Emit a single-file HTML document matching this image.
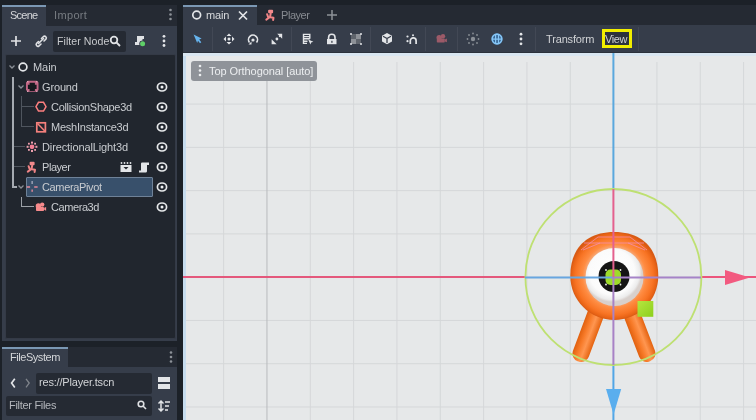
<!DOCTYPE html>
<html><head><meta charset="utf-8">
<style>
*{margin:0;padding:0;box-sizing:border-box}
html,body{width:756px;height:420px;overflow:hidden;background:#1c2128;font-family:"Liberation Sans",sans-serif;color:#c9ccd0}
.a{position:absolute}
.t{position:absolute;white-space:nowrap;font-size:11px;line-height:14px;letter-spacing:-0.2px;will-change:transform}
svg.i{position:absolute;overflow:visible}
</style></head><body>

<!-- ===== Left Scene dock ===== -->
<div class="a" style="left:2px;top:5px;width:175px;height:21px;background:#252a33"></div>
<div class="a" style="left:2px;top:26px;width:175px;height:315px;background:#363d4a"></div>
<div class="a" style="left:2px;top:5px;width:44px;height:22px;background:#363d4a"></div>
<div class="a" style="left:2px;top:5px;width:44px;height:2px;background:#7b98b4"></div>
<div class="t" style="left:10px;top:8px;color:#d4d6d9;letter-spacing:-0.75px">Scene</div>
<div class="t" style="left:54px;top:8px;color:#777c82;letter-spacing:0.35px">Import</div>
<!-- dock menu dots -->
<svg class="i" style="left:0;top:0" width="1" height="1"><g fill="#8d9298"><circle cx="170.5" cy="10" r="1.3"/><circle cx="170.5" cy="14.5" r="1.3"/><circle cx="170.5" cy="19" r="1.3"/></g></svg>

<!-- toolbar -->
<svg class="i" style="left:0;top:0" width="1" height="1">
 <g stroke="#dfe1e4" stroke-width="1.7" fill="none">
  <path d="M11 41H21M16 36V46"/>
 </g>
 <g stroke="#dfe1e4" stroke-width="1.6" fill="none" stroke-linecap="round">
  <path d="M38.5 41.5l-2 2a1.8 1.8 0 0 0 2.5 2.5l2-2"/>
  <path d="M41.5 38.5l2-2a1.8 1.8 0 0 1 2.5 2.5l-2 2"/>
  <path d="M38.5 43.5l5-5"/>
 </g>
</svg>
<div class="a" style="left:53px;top:31px;width:73px;height:21px;background:#252a33;border-radius:2px"></div>
<div class="t" style="left:57px;top:34px;color:#c8cacd;font-size:10.6px;letter-spacing:0.05px">Filter Node</div>
<svg class="i" style="left:0;top:0" width="1" height="1">
 <g stroke="#dfe1e4" stroke-width="1.8" fill="none"><circle cx="114" cy="40" r="3.3"/><path d="M116.5 42.5l3.5 3.5"/></g>
 <g fill="#e0e2e5"><path d="M137 36h7v3h-1.5v6h-7.5v-3h2z"/></g>
 <circle cx="142.6" cy="43.8" r="3.4" fill="#363d4a"/><circle cx="142.6" cy="43.8" r="2.5" fill="#5fd068"/>
 <g fill="#e3e5e8"><circle cx="164" cy="36.3" r="1.4"/><circle cx="164" cy="41" r="1.4"/><circle cx="164" cy="45.5" r="1.4"/></g>
</svg>

<!-- tree -->
<div class="a" style="left:5px;top:54px;width:171px;height:285px;background:#21262e;border:1px solid #343a46;border-radius:2px"></div>


<!-- tree lines -->
<div class="a" style="left:12px;top:77px;width:2px;height:111px;background:#a5aab1"></div>
<div class="a" style="left:12px;top:186px;width:5px;height:2px;background:#a5aab1"></div>
<div class="a" style="left:14px;top:146px;width:11px;height:1px;background:#4f555e"></div>
<div class="a" style="left:14px;top:166px;width:11px;height:1px;background:#4f555e"></div>
<div class="a" style="left:21px;top:96px;width:1px;height:30px;background:#4f555e"></div>
<div class="a" style="left:21px;top:106px;width:13px;height:1px;background:#4f555e"></div>
<div class="a" style="left:21px;top:126px;width:13px;height:1px;background:#4f555e"></div>
<div class="a" style="left:21px;top:197px;width:1px;height:10px;background:#9ca1a8"></div>
<div class="a" style="left:21px;top:206px;width:13px;height:1px;background:#9ca1a8"></div>
<!-- selected row -->
<div class="a" style="left:26px;top:177px;width:127px;height:20px;background:#38506b;border:1px solid #6f8298;border-radius:1px"></div>
<!-- arrows -->
<svg class="i" style="left:0;top:0" width="1" height="1"><g stroke="#8b9097" stroke-width="1.3" fill="none">
 <path d="M9.5 65.5l2.5 2.5l2.5-2.5"/>
 <path d="M18.5 85.5l2.5 2.5l2.5-2.5"/>
 <path d="M18.5 185.5l2.5 2.5l2.5-2.5"/>
</g></svg>
<!-- labels -->
<div class="t" style="left:33px;top:60px;letter-spacing:-0.05px">Main</div>
<div class="t" style="left:42px;top:80px;letter-spacing:-0.15px">Ground</div>
<div class="t" style="left:51px;top:100px;letter-spacing:-0.3px">CollisionShape3d</div>
<div class="t" style="left:51px;top:120px;letter-spacing:-0.24px">MeshInstance3d</div>
<div class="t" style="left:42px;top:140px;letter-spacing:-0.11px">DirectionalLight3d</div>
<div class="t" style="left:42px;top:160px;letter-spacing:-0.45px">Player</div>
<div class="t" style="left:42px;top:180px;letter-spacing:-0.35px">CameraPivot</div>
<div class="t" style="left:51px;top:200px;letter-spacing:-0.42px">Camera3d</div>
<!-- icons -->
<svg class="i" style="left:0;top:0" width="1" height="1">
 <circle cx="23" cy="67" r="3.9" stroke="#e3e5e8" stroke-width="1.7" fill="none"/>
 <path d="M27.8 80.8h8.9l1.8 1.8v7.3l-1.8 1.8h-8.9l-1.8-1.8v-7.3z" fill="#c06684"/>
 <path d="M29.6 82.8h5.3v2h1.7v4.3h-1.7v2h-5.3v-2h-1.7v-4.3h1.7z" fill="#16191e"/>
 <g fill="#e0a0b4"><rect x="27" y="81" width="1.4" height="1.4"/><rect x="36.1" y="81" width="1.4" height="1.4"/><rect x="27" y="90.6" width="1.4" height="1.4"/><rect x="36.1" y="90.6" width="1.4" height="1.4"/></g>
 <path d="M36 106.7l2.5-4.4h5l2.5 4.4l-2.5 4.4h-5z" stroke="#fc7f7f" stroke-width="1.5" fill="none"/>
 <rect x="36.8" y="122.8" width="8.6" height="9" stroke="#f4807c" stroke-width="1.7" fill="none"/>
 <path d="M37.5 123.5l7.3 7.6" stroke="#f4807c" stroke-width="1.5"/>
 <circle cx="32" cy="146.8" r="2.4" fill="#f27e93"/>
 <g fill="#eea0ae"><rect x="31" y="141.6" width="2" height="2"/><rect x="31" y="150" width="2" height="2"/><rect x="26.6" y="145.8" width="2" height="2"/><rect x="35.4" y="145.8" width="2" height="2"/>
 <rect x="28" y="142.8" width="1.8" height="1.8"/><rect x="34.2" y="142.8" width="1.8" height="1.8"/><rect x="28" y="149" width="1.8" height="1.8"/><rect x="34.2" y="149" width="1.8" height="1.8"/></g>
 <rect x="29.6" y="161.8" width="5" height="3.4" rx="1" fill="#f28a8c"/>
 <g stroke="#f08486" stroke-width="2" fill="none" stroke-linecap="round" stroke-linejoin="round"><path d="M32.2 165.5L31.5 169L27.8 171.6M28.6 166.2L29.6 169M31.8 169.2L35 169.8L34.6 172"/></g>
 <g fill="#d98596"><rect x="26.7" y="186.2" width="3.4" height="1.6"/><rect x="34.2" y="186.2" width="3.4" height="1.6"/><rect x="31.4" y="189.5" width="1.5" height="2.3"/></g>
 <rect x="31.4" y="181" width="1.5" height="3" fill="#9aa0b4"/>
 <g fill="#f78a8c"><circle cx="38.4" cy="206" r="2.7"/><circle cx="42.2" cy="204.6" r="2.2"/><rect x="36" y="207" width="8" height="4" rx="0.8"/><path d="M44.2 207.8l1.9-0.9v3.8l-1.9-0.9z"/></g>
</svg>
<svg class="i" style="left:0;top:0" width="1" height="1"><ellipse cx="162" cy="87" rx="4.6" ry="4.0" stroke="#e6e8ea" stroke-width="1.7" fill="none"/><circle cx="162" cy="87" r="1.5" fill="#eef0f2"/></svg>
<svg class="i" style="left:0;top:0" width="1" height="1"><ellipse cx="162" cy="107" rx="4.6" ry="4.0" stroke="#e6e8ea" stroke-width="1.7" fill="none"/><circle cx="162" cy="107" r="1.5" fill="#eef0f2"/></svg>
<svg class="i" style="left:0;top:0" width="1" height="1"><ellipse cx="162" cy="127" rx="4.6" ry="4.0" stroke="#e6e8ea" stroke-width="1.7" fill="none"/><circle cx="162" cy="127" r="1.5" fill="#eef0f2"/></svg>
<svg class="i" style="left:0;top:0" width="1" height="1"><ellipse cx="162" cy="147" rx="4.6" ry="4.0" stroke="#e6e8ea" stroke-width="1.7" fill="none"/><circle cx="162" cy="147" r="1.5" fill="#eef0f2"/></svg>
<svg class="i" style="left:0;top:0" width="1" height="1"><ellipse cx="162" cy="167" rx="4.6" ry="4.0" stroke="#e6e8ea" stroke-width="1.7" fill="none"/><circle cx="162" cy="167" r="1.5" fill="#eef0f2"/></svg>
<svg class="i" style="left:0;top:0" width="1" height="1"><ellipse cx="162" cy="187" rx="4.6" ry="4.0" stroke="#e6e8ea" stroke-width="1.7" fill="none"/><circle cx="162" cy="187" r="1.5" fill="#eef0f2"/></svg>
<svg class="i" style="left:0;top:0" width="1" height="1"><ellipse cx="162" cy="207" rx="4.6" ry="4.0" stroke="#e6e8ea" stroke-width="1.7" fill="none"/><circle cx="162" cy="207" r="1.5" fill="#eef0f2"/></svg>
<svg class="i" style="left:0;top:0" width="1" height="1">
 <g fill="#e3e5e8"><rect x="120.5" y="165" width="11" height="7"/><circle cx="121.5" cy="163" r="0.9"/><circle cx="124.5" cy="163" r="0.9"/><circle cx="127.5" cy="163" r="0.9"/><circle cx="130.5" cy="163" r="0.9"/></g>
 <path d="M123.5 167h5l-2.5 2.5z" fill="#21262e"/>
 <path d="M141 162.5h8v2.5h-2v6c0 1-0.8 1.5-1.5 1.5h-6.5v-2h2v-6.5c0-1 0.5-1.5 1-1.5z" fill="#e3e5e8"/>
</svg>

<!-- ===== FileSystem dock ===== -->
<div class="a" style="left:2px;top:347px;width:175px;height:20px;background:#252a33"></div>
<div class="a" style="left:2px;top:367px;width:175px;height:53px;background:#363d4a"></div>
<div class="a" style="left:2px;top:347px;width:66px;height:21px;background:#363d4a"></div>
<div class="a" style="left:2px;top:347px;width:66px;height:2px;background:#7b98b4"></div>
<div class="t" style="left:10px;top:350px;color:#d4d6d9;letter-spacing:-0.45px">FileSystem</div>
<svg class="i" style="left:0;top:0" width="1" height="1"><g fill="#8d9298"><circle cx="171" cy="352.5" r="1.3"/><circle cx="171" cy="357" r="1.3"/><circle cx="171" cy="361.5" r="1.3"/></g>
 <g stroke="#e3e5e8" stroke-width="1.7" fill="none"><path d="M14.8 378.8L11.6 383.1L14.8 387.4"/></g>
 <g stroke="#80858c" stroke-width="1.3" fill="none"><path d="M26 378.8L29.2 383.1L26 387.4"/></g>
</svg>
<div class="a" style="left:36px;top:373px;width:116px;height:21px;background:#252a33;border-radius:2px"></div>
<div class="t" style="left:39px;top:375px;color:#d2d4d7;letter-spacing:-0.18px">res://Player.tscn</div>
<svg class="i" style="left:0;top:0" width="1" height="1"><g fill="#e3e5e8"><rect x="158" y="377" width="12" height="5"/><rect x="158" y="384" width="12" height="5"/></g></svg>
<div class="a" style="left:6px;top:396px;width:146px;height:20px;background:#252a33;border-radius:2px"></div>
<div class="t" style="left:9px;top:398px;color:#b4b7bc;letter-spacing:-0.3px">Filter Files</div>
<svg class="i" style="left:0;top:0" width="1" height="1">
 <g stroke="#dfe1e4" stroke-width="1.6" fill="none"><circle cx="141" cy="404" r="2.8"/><path d="M143 406l3 3"/></g>
 <g stroke="#e3e5e8" stroke-width="1.5" fill="none"><path d="M161 401v10M158.5 403.5l2.5-2.5l2.5 2.5M158.5 408.5l2.5 2.5l2.5-2.5M165 402h5M165 406h4M165 410h3"/></g>
</svg>

<!-- ===== Main area ===== -->
<div class="a" style="left:183px;top:5px;width:573px;height:20px;background:#252a33"></div>
<div class="a" style="left:183px;top:25px;width:573px;height:28px;background:#363d4a"></div>
<div class="a" style="left:183px;top:5px;width:74px;height:21px;background:#363d4a"></div>
<div class="a" style="left:183px;top:5px;width:74px;height:2px;background:#7b98b4"></div>
<svg class="i" style="left:0;top:0" width="1" height="1">
 <circle cx="196.7" cy="15" r="3.9" stroke="#e3e5e8" stroke-width="1.7" fill="none"/>
 <g stroke="#e3e5e8" stroke-width="1.7"><path d="M239 11.5l8 8M247 11.5l-8 8"/></g>
 <g stroke="#8d9298" stroke-width="1.5"><path d="M327 15h10M332 10v10"/></g>
</svg>
<div class="t" style="left:206px;top:8px;color:#d8dadd;letter-spacing:-0.15px">main</div>
<div class="t" style="left:281px;top:8px;color:#878b91;letter-spacing:-0.45px">Player</div>
<div class="t" style="left:546px;top:32px;color:#d0d2d5;letter-spacing:-0.15px">Transform</div>
<div class="a" style="left:602px;top:29px;width:30px;height:19px;border:3px solid #f2ee00;background:#2c323c"></div>
<div class="t" style="left:605px;top:32px;color:#d0d2d5;letter-spacing:-0.4px">View</div>
<div class="a" style="left:183px;top:52px;width:573px;height:1px;background:#2b313b"></div>
<!-- separators -->
<div class="a" style="left:212px;top:27px;width:1px;height:24px;background:#424855"></div>
<div class="a" style="left:291px;top:27px;width:1px;height:24px;background:#424855"></div>
<div class="a" style="left:370px;top:27px;width:1px;height:24px;background:#424855"></div>
<div class="a" style="left:425px;top:27px;width:1px;height:24px;background:#424855"></div>
<div class="a" style="left:457px;top:27px;width:1px;height:24px;background:#424855"></div>
<div class="a" style="left:535px;top:27px;width:1px;height:24px;background:#424855"></div>
<div class="a" style="left:638px;top:27px;width:1px;height:24px;background:#424855"></div>

<!-- viewport -->
<div class="a" style="left:183px;top:53px;width:573px;height:367px;background:#e6e8e9;overflow:hidden">
 <div class="a" style="left:0;top:0;width:3px;height:367px;background:#c6dcee"></div>
 <div class="a" style="left:0;top:0;width:573px;height:3px;background:#d9e6f1"></div>
</div>

<svg class="a" style="left:0;top:0" width="756" height="420" viewBox="0 0 756 420">
 <path d="M186 104.09H756" stroke="#d5d7d9" stroke-width="1"/><path d="M186 147.36H756" stroke="#d5d7d9" stroke-width="1"/><path d="M186 190.63H756" stroke="#d5d7d9" stroke-width="1"/><path d="M186 233.90H756" stroke="#d5d7d9" stroke-width="1"/><path d="M186 277.17H756" stroke="#d5d7d9" stroke-width="1"/><path d="M186 320.44H756" stroke="#d5d7d9" stroke-width="1"/><path d="M186 363.71H756" stroke="#d5d7d9" stroke-width="1"/><path d="M186 406.98H756" stroke="#d5d7d9" stroke-width="1"/><path d="M223.63 62V420" stroke="#d5d7d9" stroke-width="1"/><path d="M266.96 62V420" stroke="#b8babd" stroke-width="1"/><path d="M310.29 62V420" stroke="#d5d7d9" stroke-width="1"/><path d="M353.62 62V420" stroke="#d5d7d9" stroke-width="1"/><path d="M396.95 62V420" stroke="#d5d7d9" stroke-width="1"/><path d="M440.28 62V420" stroke="#d5d7d9" stroke-width="1"/><path d="M483.61 62V420" stroke="#d5d7d9" stroke-width="1"/><path d="M526.94 62V420" stroke="#d5d7d9" stroke-width="1"/><path d="M570.27 62V420" stroke="#d5d7d9" stroke-width="1"/><path d="M613.60 62V420" stroke="#d5d7d9" stroke-width="1"/><path d="M656.93 62V420" stroke="#d5d7d9" stroke-width="1"/><path d="M700.26 62V420" stroke="#d5d7d9" stroke-width="1"/><path d="M743.59 62V420" stroke="#d5d7d9" stroke-width="1"/>
</svg>
<!-- Top Orthogonal label -->
<div class="a" style="left:191px;top:61px;width:126px;height:20px;background:#8f9399;border-radius:3px"></div>
<svg class="i" style="left:0;top:0" width="1" height="1"><g fill="#eceef0"><circle cx="200" cy="66" r="1.3"/><circle cx="200" cy="70.5" r="1.3"/><circle cx="200" cy="75" r="1.3"/></g></svg>
<div class="t" style="left:209px;top:64px;color:#eceef0;font-size:11px;letter-spacing:-0.07px">Top Orthogonal [auto]</div>

<!-- gizmo + character -->
<svg class="a" style="left:0;top:0" width="756" height="420" viewBox="0 0 756 420">
 <defs>
  <radialGradient id="body" cx="614.3" cy="276" r="44" gradientUnits="userSpaceOnUse">
   <stop offset="0.64" stop-color="#f6a878"/><stop offset="0.72" stop-color="#ff8c42"/><stop offset="0.88" stop-color="#f87424"/><stop offset="0.96" stop-color="#e96416"/><stop offset="1" stop-color="#d85a14"/>
  </radialGradient>
  <linearGradient id="leg" x1="0" y1="0" x2="1" y2="0">
   <stop offset="0" stop-color="#e0600f"/><stop offset="0.3" stop-color="#f77a28"/><stop offset="0.6" stop-color="#ff9650"/><stop offset="1" stop-color="#e4620f"/>
  </linearGradient>
  <radialGradient id="eye" cx="612" cy="272" r="30" gradientUnits="userSpaceOnUse">
   <stop offset="0" stop-color="#ffffff"/><stop offset="0.75" stop-color="#fbfbfb"/><stop offset="0.92" stop-color="#ececec"/><stop offset="1" stop-color="#d8d0cc"/>
  </radialGradient>
  <linearGradient id="gsq" x1="0" y1="0" x2="1" y2="1">
   <stop offset="0" stop-color="#b6e640"/><stop offset="1" stop-color="#8ccf1c"/>
  </linearGradient>
 </defs>
 <!-- axes outside -->
 <path d="M183 277H525" stroke="#e4587c" stroke-width="2"/>
 <path d="M701 277H756" stroke="#ec557c" stroke-width="2"/>
 <path d="M613.4 53V189" stroke="#5aa8de" stroke-width="2"/>
 <path d="M613.4 365V420" stroke="#52a6e6" stroke-width="2"/>
 <!-- legs -->
 <g transform="translate(598 308) rotate(20.5)"><rect x="-8.5" y="-4" width="17" height="61" rx="8" fill="url(#leg)"/></g>
 <g transform="translate(629.5 308) rotate(-21)"><rect x="-8.5" y="-4" width="17" height="61" rx="8" fill="url(#leg)"/></g>
 <!-- body -->
 <path d="M614.3 232C642.0 232 658.3 248.3 658.3 276C658.3 300.3 638.6 320 614.3 320C590.0 320 570.3 300.3 570.3 276C570.3 248.3 586.6 232 614.3 232Z" fill="url(#body)"/>
 <circle cx="614.5" cy="277" r="29" fill="url(#eye)"/>
 <circle cx="614" cy="276.5" r="15.5" fill="#151515"/>
 <rect x="605.5" y="269.5" width="15.5" height="15.5" rx="5" fill="#9edc2a"/>
 <g fill="#f4f6f0"><circle cx="606" cy="270" r="0.9"/><circle cx="620.5" cy="270" r="0.9"/><circle cx="606" cy="284.5" r="0.9"/><circle cx="620.5" cy="284.5" r="0.9"/></g>
 <rect x="637.5" y="301" width="15.8" height="15.8" fill="url(#gsq)"/>
 <!-- frustum lines -->
 <g stroke="#f58fb0" stroke-width="0.9" fill="none" opacity="0.85"><path d="M581 250L598 237H630L647 250M584 243H644M583 250L600 243M645 250L628 243"/></g>
 <!-- circle -->
 <circle cx="613.4" cy="277" r="88" stroke="#bee072" stroke-width="1.8" fill="none"/>
 <!-- inside axes -->
 <path d="M525 277.5H613.4" stroke="#68a6e0" stroke-width="2"/>
 <path d="M613.4 277.5H701" stroke="#a683c8" stroke-width="2"/>
 <path d="M613.4 189V277" stroke="#e4608e" stroke-width="2"/>
 <path d="M613.4 277V365" stroke="#a882c6" stroke-width="2"/>
 <!-- arrows -->
 <path d="M725 270L750 277.4L725 285Z" fill="#f25a80"/>
 <path d="M606 389H621.2L613.6 414.5Z" fill="#5aaeee"/>
</svg>

<!-- toolbar icons -->
<svg class="i" style="left:0;top:0" width="1" height="1">
 <path d="M193.6 34.6L201.6 38.6L199.2 39.6L201.3 42.2L200 43.2L198 40.7L197.2 43Z" fill="#66b4ee"/>
 <g fill="#e3e5e8">
  <path d="M229 33.5l2.5 2.5h-5zM229 44.5l2.5-2.5h-5zM223.5 39l2.5-2.5v5zM234.5 39l-2.5-2.5v5z"/>
  <circle cx="229" cy="39" r="1.5"/>
 </g>
 <g stroke="#e3e5e8" stroke-width="1.6" fill="none"><path d="M249.5 42.5a4.5 4.5 0 1 1 7 0"/></g>
 <circle cx="253" cy="40" r="1.6" fill="#e3e5e8"/>
 <path d="M248.5 44.5h3v-3z" fill="#e3e5e8"/>
 <path d="M277.2 33.8H282.2V38.8Z" fill="#e3e5e8"/><path d="M279.2 36.8l1-1" stroke="#e3e5e8" stroke-width="1.2"/>
 <path d="M276.6 44.2H271.6V39.2Z" fill="#e3e5e8"/>
 <circle cx="276.9" cy="39" r="1.4" fill="#e3e5e8"/>
 <g stroke="#e3e5e8" stroke-width="1.4" fill="none"><path d="M303.5 44V34.4H309.8V38.8M303.5 36.6H309.8M303.5 38.8H309.8M303.5 41.2H307.5M303.5 43.4H307"/></g>
 <path d="M308.2 39.6L313.4 41.8L311.2 42.6L310.4 44.6Z" fill="#e3e5e8"/>
 <path d="M328.6 39v-1.6a3.2 3.2 0 0 1 6.4 0v1.6" stroke="#e3e5e8" stroke-width="1.6" fill="none"/>
 <rect x="327" y="39" width="9.5" height="5.2" fill="#e3e5e8"/>
 <rect x="331.2" y="40.8" width="1.4" height="2" fill="#4a505a"/>
 <rect x="351" y="34" width="10" height="10" fill="#5f646c"/>
 <rect x="351" y="39" width="5" height="5" fill="#8d9197"/>
 <rect x="356" y="34" width="5" height="5" fill="#8d9197"/>
 <g fill="#e3e5e8"><circle cx="351" cy="34" r="1"/><circle cx="361" cy="34" r="1"/><circle cx="351" cy="44" r="1"/><circle cx="361" cy="44" r="1"/></g>
 <path d="M387 33l5 2.8v5.7l-5 2.8l-5-2.8v-5.7z" fill="#e3e5e8"/>
 <path d="M387 38.5l4-2.3M387 38.5v4.5M387 38.5l-4-2.3" stroke="#363d4a" stroke-width="1.3"/>
 <g fill="#e3e5e8"><circle cx="407.5" cy="36.5" r="1.1"/><circle cx="407.5" cy="41.2" r="1.1"/><circle cx="413" cy="35.3" r="1"/></g>
 <path d="M410.3 44v-3.2a2.9 2.9 0 0 1 5.8 0v3.2" stroke="#e3e5e8" stroke-width="1.7" fill="none"/>
 <g fill="#9c5a68" transform="translate(400.8 -168.4)"><circle cx="38.4" cy="206" r="2.7"/><circle cx="42.2" cy="204.6" r="2.2"/><rect x="36" y="207" width="8" height="4" rx="0.8"/><path d="M44.2 207.8l1.9-0.9v3.8l-1.9-0.9z"/></g>
 <g fill="#8a8f96"><circle cx="473" cy="39" r="2.2"/><circle cx="473" cy="33.5" r="0.9"/><circle cx="473" cy="44.5" r="0.9"/><circle cx="467.5" cy="39" r="0.9"/><circle cx="478.5" cy="39" r="0.9"/><circle cx="469" cy="35" r="0.9"/><circle cx="477" cy="35" r="0.9"/><circle cx="469" cy="43" r="0.9"/><circle cx="477" cy="43" r="0.9"/></g>
 <circle cx="497" cy="39" r="5.6" fill="#33618f"/>
 <circle cx="497" cy="39" r="4.8" stroke="#86c6f6" stroke-width="1.7" fill="none"/>
 <path d="M492.5 39.2H501.5M495.6 34.5V43.5M498.5 34.5V43.5" stroke="#86c6f6" stroke-width="1.3"/>
 <g fill="#e3e5e8"><circle cx="521" cy="34.2" r="1.4"/><circle cx="521" cy="39" r="1.4"/><circle cx="521" cy="43.8" r="1.4"/></g>
 <g transform="translate(238.5 -152)"><rect x="29.6" y="161.8" width="5" height="3.4" rx="1" fill="#f28a8c"/>
 <g stroke="#f08486" stroke-width="2" fill="none" stroke-linecap="round" stroke-linejoin="round"><path d="M32.2 165.5L31.5 169L27.8 171.6M28.6 166.2L29.6 169M31.8 169.2L35 169.8L34.6 172"/></g></g>
</svg>
</body></html>
